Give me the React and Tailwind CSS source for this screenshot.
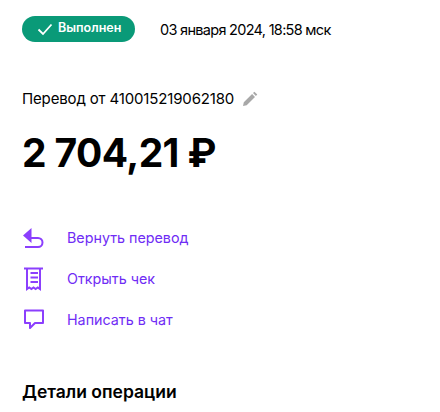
import React from 'react';

const actions = [
    { label: 'Вернуть перевод', icon: 'back' },
    { label: 'Открыть чек', icon: 'receipt' },
    { label: 'Написать в чат', icon: 'chat' },
];

const ActionIcon = ({ name }) => {
    if (name === 'back') {
        return (
            <svg width="24" height="24" viewBox="0 0 24 24" fill="#8b3ffd">
                <path d="M9.500 2 1 9.500 9.500 17v-4H16a3.500 3.500 0 0 1 0 7H3v2h13a5.500 5.500 0 0 0 0-11H9.500z" />
            </svg>
        );
    }
    if (name === 'receipt') {
        return (
            <svg width="24" height="24" viewBox="0 0 24 24" fill="none" stroke="#8b3ffd" strokeWidth="2">
                <path d="M2 1.500h19" />
                <path d="M5 2v20l2.200-1.600 2.200 1.600 2.100-1.600 2.100 1.600 2.200-1.600 2.200 1.600V2" />
                <path d="M8.500 6h7.500M8.500 10.500h7.500M8.500 15h7.500" />
            </svg>
        );
    }
    return (
        <svg width="24" height="24" viewBox="0 0 24 24" fill="none" stroke="#8b3ffd" strokeWidth="2">
            <path d="M3 2.500h18v12.500h-8l-5 5v-5H3z" strokeLinejoin="round" />
        </svg>
    );
};

const App = () => {
    return (
        <div className="w-[440px] h-[412px] overflow-hidden bg-white pl-[22px] pt-[14px] text-black font-['Inter','Noto_Sans',sans-serif]">
            <div className="flex items-center">
                <div className="flex items-center h-[26px] w-[113px] rounded-[13px] bg-[#0a9a78] pl-[15px] text-white">
                    <svg width="16" height="14" viewBox="0 0 16 14" fill="none" stroke="#fff" strokeWidth="1.800">
                        <path d="M1.500 7.500 6 12l8.500-9.500" />
                    </svg>
                    <span className="ml-[5px] text-[12.500px] font-semibold leading-none -mt-[1px]">Выполнен</span>
                </div>
                <span className="ml-[25px] text-[14.500px] leading-[26px] mt-[3px] tracking-[-0.7px]">03 января 2024, 18:58 мск</span>
            </div>

            <div className="flex items-center mt-[44px] h-[24px]">
                <span className="text-[15px] tracking-[-0.15px]">Перевод от 410015219062180</span>
                <svg className="ml-[8px]" width="16" height="16" viewBox="0 0 16 16" fill="#a8a8a8">
                    <path d="M1 15l.8-3.700 8.300-8.300 2.900 2.900-8.300 8.300zM11 2.100l1.400-1.400 2.900 2.900-1.400 1.400z" />
                </svg>
            </div>

            <div className="mt-[19px] text-[39px] font-bold leading-[46px] tracking-[-0.6px]">2 704,21 ₽</div>

            <div className="mt-[50px] flex flex-col gap-[17px]">
                {actions.map((action) => (
                    <div key={action.label} className="flex items-center h-[24px]">
                        <ActionIcon name={action.icon} />
                        <span className="ml-[21px] text-[14.300px] text-[#6f2cf5]">{action.label}</span>
                    </div>
                ))}
            </div>

            <h2 className="mt-[48px] text-[17.500px] font-semibold leading-[24px]">Детали операции</h2>
        </div>
    );
};

export default App;
